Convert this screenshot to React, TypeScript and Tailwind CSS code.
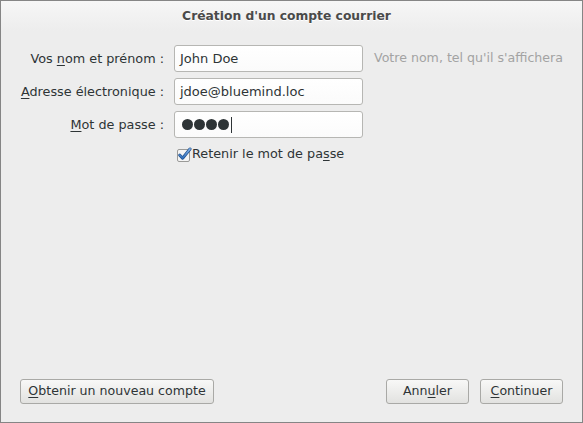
import React from 'react'

const font = { fontFamily: '"DejaVu Sans", "Liberation Sans", sans-serif' }

function Field({ label, children, hint }: { label: React.ReactNode; children: React.ReactNode; hint?: string }) {
  return (
    <div className="flex items-center h-[27px]">
      <div className="w-[163px] text-right text-[12.8px] text-[#2e3436] whitespace-nowrap">{label}</div>
      <div className="ml-[10px] w-[189px] h-[27px] rounded-[3px] border border-[#b6b6b3] bg-gradient-to-b from-white to-[#fbfbfb] flex items-center px-[5px] text-[13px] text-[#2e3436]">
        {children}
      </div>
      {hint && <div className="ml-[11px] text-[12.6px] text-[#a3a3a3] whitespace-nowrap">{hint}</div>}
    </div>
  )
}

function Button({ children, className }: { children: React.ReactNode; className?: string }) {
  return (
    <button
      className={
        'h-[25px] rounded-[3px] border border-[#a9a9a6] bg-gradient-to-b from-[#f8f8f7] to-[#e2e2e0] text-[12.6px] text-[#2e3436] flex items-center justify-center ' +
        (className ?? '')
      }
    >
      {children}
    </button>
  )
}

function CheckIcon() {
  return (
    <svg width="15" height="15" viewBox="0 0 15 15">
      <defs>
        <linearGradient id="chk" x1="0" y1="0" x2="0" y2="1">
          <stop offset="0" stopColor="#7fb0e8" />
          <stop offset="1" stopColor="#2f6cb8" />
        </linearGradient>
      </defs>
      <rect x="0.5" y="2.5" width="12" height="12" rx="1.5" fill="#f4f4f4" stroke="#9a9a98" />
      <path d="M2.8 8.2 L5.6 11.2 L13 2" fill="none" stroke="#1f4f8c" strokeWidth="3" strokeLinecap="round" strokeLinejoin="round" />
      <path d="M2.8 8.2 L5.6 11.2 L13 2" fill="none" stroke="url(#chk)" strokeWidth="1.8" strokeLinecap="round" strokeLinejoin="round" />
    </svg>
  )
}

export default function App() {
  return (
    <div style={font} className="w-[583px] h-[423px] border border-[#858585] bg-[#ededed] flex flex-col">
      <div className="h-[30px] bg-gradient-to-b from-[#f6f6f6] to-[#ededed] flex items-center justify-center pr-[10px]">
        <span className="text-[12.3px] font-bold text-[#4a4a4a] [text-shadow:0_1px_0_#ffffff]">Création d'un compte courrier</span>
      </div>
      <div className="pt-[14px] flex flex-col gap-[6px]">
        <Field label={<>Vos <u className="underline-offset-2">n</u>om et prénom :</>} hint="Votre nom, tel qu'il s'affichera">
          John Doe
        </Field>
        <Field label={<><u className="underline-offset-2">A</u>dresse électronique :</>}>jdoe@bluemind.loc</Field>
        <Field label={<><u className="underline-offset-2">M</u>ot de passe :</>}>
          <span className="flex items-center gap-[1px] pl-[2px]">
            <span className="w-[11px] h-[11px] rounded-full bg-[#2e3436]" />
            <span className="w-[11px] h-[11px] rounded-full bg-[#2e3436]" />
            <span className="w-[11px] h-[11px] rounded-full bg-[#2e3436]" />
            <span className="w-[11px] h-[11px] rounded-full bg-[#2e3436]" />
            <span className="w-[1px] h-[16px] bg-[#2e3436] ml-[1px]" />
          </span>
        </Field>
        <div className="flex items-center pl-[176px] mt-[1px] h-[18px]">
          <CheckIcon />
          <span className="text-[12.8px] text-[#2e3436]">
            Retenir le mot de pa<u className="underline-offset-2">s</u>se
          </span>
        </div>
      </div>
      <div className="mt-auto flex items-center px-[19px] pb-[18px]">
        <Button className="w-[194px]">
          <u className="underline-offset-2">O</u>btenir un nouveau compte
        </Button>
        <div className="flex-1" />
        <Button className="w-[83px]">
          Ann<u className="underline-offset-2">u</u>ler
        </Button>
        <Button className="w-[83px] ml-[11px]">
          <u className="underline-offset-2">C</u>ontinuer
        </Button>
      </div>
    </div>
  )
}
